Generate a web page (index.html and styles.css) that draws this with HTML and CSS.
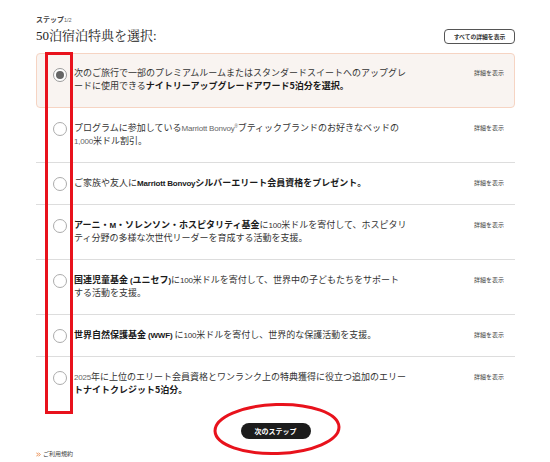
FILE: index.html
```html
<!DOCTYPE html>
<html lang="ja">
<head>
<meta charset="utf-8">
<title>50泊宿泊特典を選択</title>
<link rel="stylesheet" href="styles.css">
</head>
<body>
<div class="page">
  <header class="head">
    <div class="head-left">
      <div class="step">ステップ<span class="step-num">1/2</span></div>
      <h1 class="title">50泊宿泊特典を選択:</h1>
    </div>
    <button class="all-btn" type="button">すべての詳細を表示</button>
  </header>

  <ul class="options">
    <li class="option selected">
      <span class="radio checked"></span>
      <p class="text">次のご旅行で一部のプレミアムルームまたはスタンダードスイートへのアップグレ<br>ードに使用できる<b>ナイトリーアップグレードアワード5泊分を選択。</b></p>
      <a class="detail">詳細を表示</a>
    </li>
    <li class="option">
      <span class="radio"></span>
      <p class="text">プログラムに参加している<span class="en light">Marriott Bonvoy<sup>®</sup></span>ブティックブランドのお好きなベッドの<br><span class="en light">1,000</span>米ドル割引。</p>
      <a class="detail">詳細を表示</a>
    </li>
    <li class="option">
      <span class="radio"></span>
      <p class="text">ご家族や友人に<b><span class="en">Marriott Bonvoy</span>シルバーエリート会員資格をプレゼント。</b></p>
      <a class="detail">詳細を表示</a>
    </li>
    <li class="option">
      <span class="radio"></span>
      <p class="text"><b>アーニ・<span class="en">M</span>・ソレンソン・ホスピタリティ基金</b>に<span class="en">100</span>米ドルを寄付して、ホスピタリ<br>ティ分野の多様な次世代リーダーを育成する活動を支援。</p>
      <a class="detail">詳細を表示</a>
    </li>
    <li class="option">
      <span class="radio"></span>
      <p class="text"><b>国連児童基金 <span class="en">(</span>ユニセフ<span class="en">)</span></b>に<span class="en">100</span>米ドルを寄付して、世界中の子どもたちをサポート<br>する活動を支援。</p>
      <a class="detail">詳細を表示</a>
    </li>
    <li class="option">
      <span class="radio"></span>
      <p class="text"><b>世界自然保護基金 <span class="en">(WWF)</span></b> に<span class="en">100</span>米ドルを寄付し、世界的な保護活動を支援。</p>
      <a class="detail">詳細を表示</a>
    </li>
    <li class="option last">
      <span class="radio"></span>
      <p class="text"><span class="en light">2025</span>年に上位のエリート会員資格とワンランク上の特典獲得に役立つ追加のエリー<br><b>トナイトクレジット5泊分。</b></p>
      <a class="detail">詳細を表示</a>
    </li>
  </ul>

  <div class="actions">
    <button class="next-btn" type="button">次のステップ</button>
  </div>

  <footer class="foot">
    <svg class="chev" viewBox="0 0 6 6" width="5" height="5" aria-hidden="true"><path d="M0.5 0.8 L2.6 3 L0.5 5.2 M3 0.8 L5.1 3 L3 5.2" fill="none" stroke="#e8823f" stroke-width="1.1"/></svg>
    <a class="terms">ご利用規約</a>
  </footer>

  <div class="mark-rect"></div>
  <svg class="mark-ellipse" viewBox="0 0 130 56" width="130" height="56" aria-hidden="true">
    <ellipse cx="65" cy="28" rx="62" ry="24.5" fill="none" stroke="#e8121c" stroke-width="3" transform="rotate(-2 65 28)"/>
  </svg>
</div>
</body>
</html>
```

FILE: styles.css
```css
* { box-sizing: border-box; }

html, body {
  margin: 0;
  padding: 0;
  background: #ffffff;
}

body {
  font-family: "Noto Sans CJK JP", "Liberation Sans", sans-serif;
  color: #333333;
}

.page {
  position: relative;
  width: 550px;
  padding: 14px 35px 0 36px;
}

.head {
  display: flex;
  justify-content: space-between;
  align-items: flex-end;
}

.step {
  font-size: 7px;
  line-height: 10px;
  color: #444444;
  font-weight: 700;
}

.step-num {
  font-family: "Liberation Sans", sans-serif;
  font-size: 5.5px;
  font-weight: 400;
  color: #666666;
  line-height: 1;
}

.title {
  margin: 4px 0 0 0;
  font-family: "Liberation Serif", "Noto Serif CJK JP", "Noto Sans CJK JP", serif;
  font-size: 13px;
  line-height: 16px;
  font-weight: 400;
  color: #222222;
}

.all-btn {
  height: 15px;
  width: 71px;
  padding: 0;
  border: 1px solid #555555;
  border-radius: 4px;
  background: #ffffff;
  font-family: "Noto Sans CJK JP", sans-serif;
  font-size: 5.8px;
  font-weight: 700;
  color: #333333;
  line-height: 13px;
}

.options {
  list-style: none;
  margin: 9px 0 0 0;
  padding: 0;
}

.option {
  display: grid;
  grid-template-columns: 14px 1fr auto;
  column-gap: 7px;
  align-items: start;
  padding: 13px 11px 15px 17px;
  border-bottom: 1px solid #dddddd;
}

.option.selected {
  background: #f9f4f1;
  border: 1px solid #f6d4c3;
  border-radius: 4px;
  padding: 12px 10px 15px 16px;
}

.option.last {
  border-bottom: none;
}

.radio {
  position: relative;
  width: 14px;
  height: 14px;
  margin-top: 1px;
  margin-bottom: -4px;
  border: 1px solid #acacac;
  border-radius: 50%;
  background: #ffffff;
}

.radio.checked {
  margin-top: 2px;
  border: 1.5px solid #9a9a9a;
}

.radio.checked::after {
  content: "";
  position: absolute;
  left: 1.5px;
  top: 1.5px;
  width: 8px;
  height: 8px;
  border-radius: 50%;
  background: #666666;
}

.text {
  margin: 0;
  font-size: 9px;
  line-height: 13px;
  color: #333333;
  white-space: nowrap;
}

.text b {
  font-weight: 700;
  color: #1a1a1a;
  line-height: 1;
}

.en {
  font-family: "Liberation Sans", sans-serif;
  font-size: 8px;
  letter-spacing: -0.2px;
  line-height: 1;
}

.en.light {
  color: #666666;
}

.en sup {
  font-size: 4.5px;
  line-height: 0;
  vertical-align: 3px;
}

.detail {
  font-size: 6px;
  line-height: 13px;
  color: #444444;
  white-space: nowrap;
}

.actions {
  display: flex;
  justify-content: center;
  margin-top: 12px;
}

.next-btn {
  width: 70px;
  height: 16px;
  padding: 0;
  border: none;
  border-radius: 8px;
  background: #1c1c1c;
  color: #ffffff;
  font-family: "Noto Sans CJK JP", sans-serif;
  font-size: 7px;
  font-weight: 700;
  line-height: 16px;
}

.foot {
  display: flex;
  align-items: center;
  gap: 2px;
  margin-top: 10px;
  height: 10px;
}

.chev {
  display: block;
}

.terms {
  font-size: 6px;
  line-height: 10px;
  color: #444444;
}

.mark-rect {
  position: absolute;
  left: 45px;
  top: 52px;
  width: 28px;
  height: 362px;
  border: 3px solid #e8121c;
}

.mark-ellipse {
  position: absolute;
  left: 212px;
  top: 401px;
}
```
